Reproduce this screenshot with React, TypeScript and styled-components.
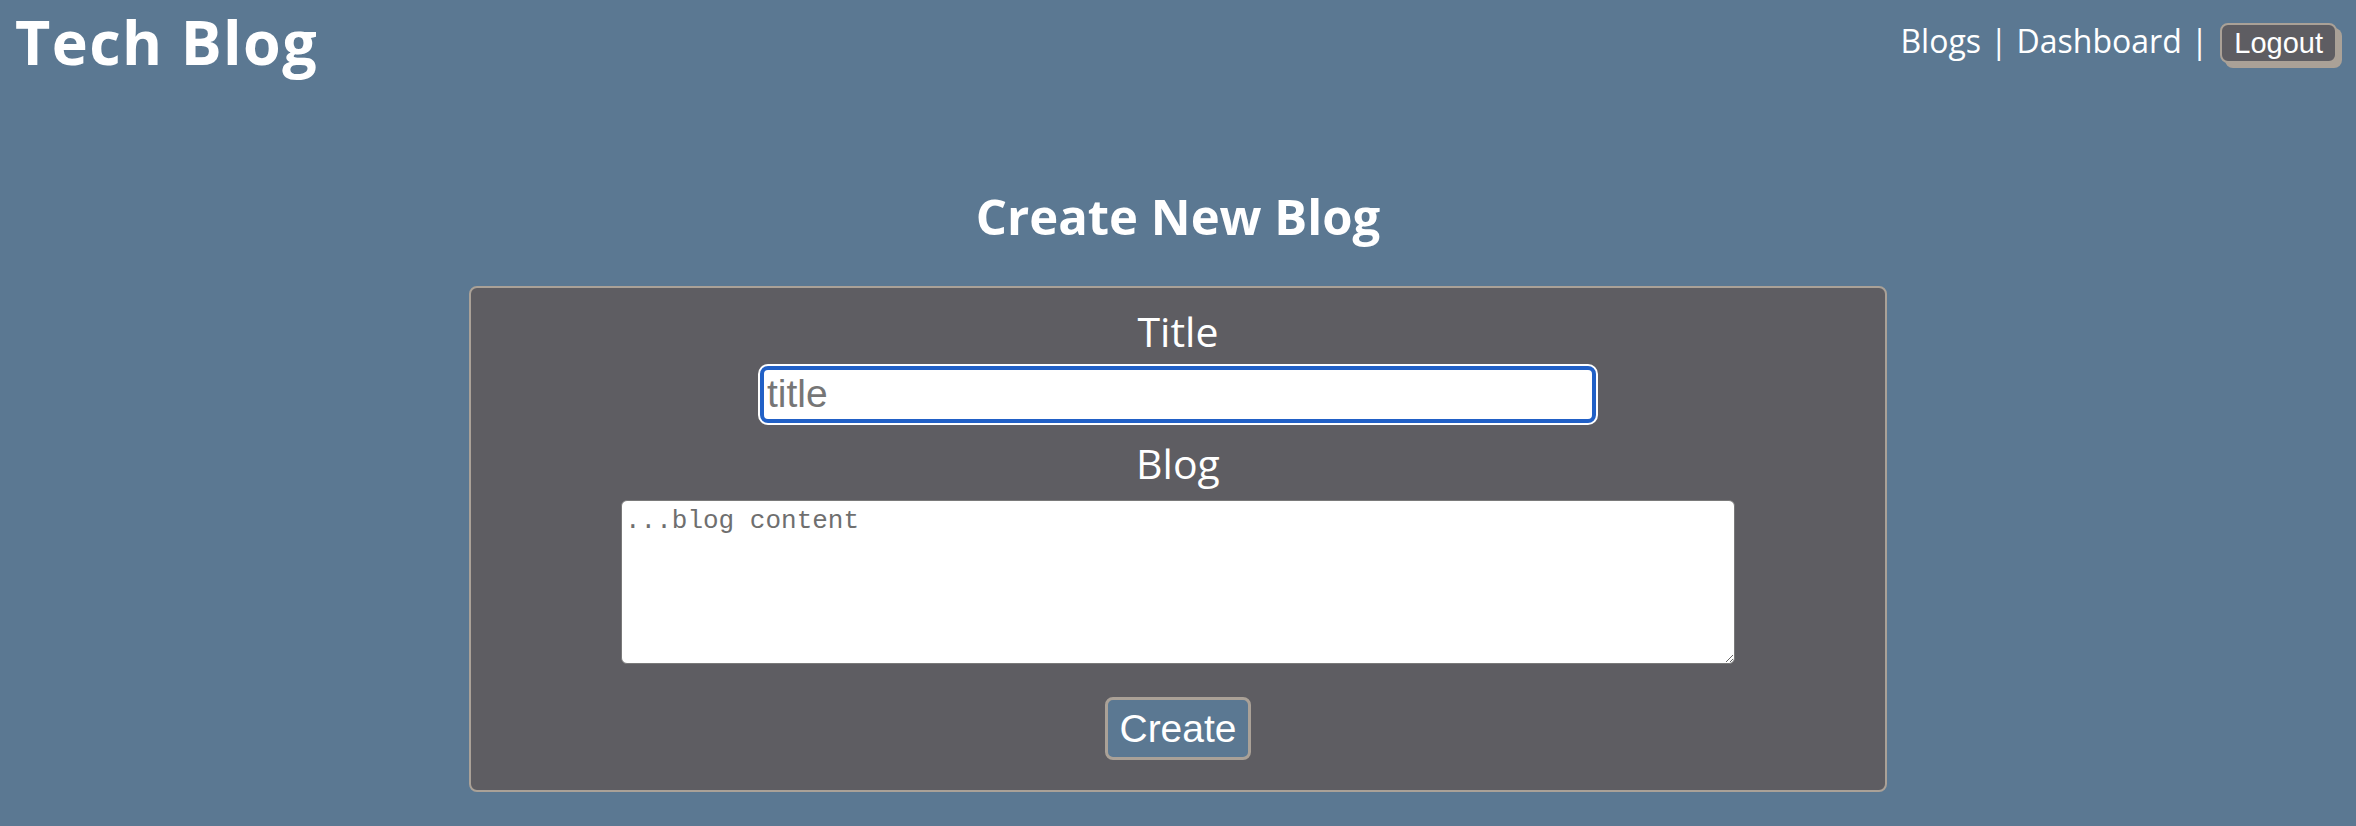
import React from "react";
import styled, { createGlobalStyle } from "styled-components";

const GlobalStyle = createGlobalStyle`
  html, body {
    margin: 0;
    padding: 0;
    background: #5b7892;
  }
  body {
    min-height: 100vh;
    font-family: "Open Sans", "Noto Sans", sans-serif;
    color: #ffffff;
  }
  * { box-sizing: border-box; }
`;

const Page = styled.div`
  min-height: 826px;
  background: #5b7892;
`;

const Header = styled.header`
  display: flex;
  justify-content: space-between;
  align-items: flex-start;
`;

const Brand = styled.h1`
  margin: 11px 0 0 15px;
  font-size: 61px;
  line-height: 1;
  font-weight: 700;
  letter-spacing: 1.4px;
  color: #ffffff;
`;

const Nav = styled.nav`
  display: flex;
  align-items: baseline;
  margin: 23px 19px 0 0;
  font-size: 32px;
  line-height: 32px;
`;

const NavLink = styled.a`
  color: #ffffff;
  text-decoration: none;
  cursor: pointer;
`;

const Divider = styled.span<{ $right?: number }>`
  margin: 0 ${(p) => p.$right ?? 9}px 0 9px;
`;

const LogoutButton = styled.button`
  font-family: "Liberation Sans", Arial, sans-serif;
  font-size: 29px;
  line-height: 32px;
  color: #ffffff;
  background: #5e5d62;
  border: 2px solid #aaa197;
  border-radius: 8px;
  padding: 2px 12px;
  box-shadow: 5px 5px 0 #aaa197;
  cursor: pointer;
`;

const Main = styled.main`
  display: flex;
  flex-direction: column;
  align-items: center;
`;

const Heading = styled.h2`
  margin: 115px 0 40px;
  font-size: 49px;
  line-height: 1.2;
  font-weight: 700;
  color: #ffffff;
`;

const Form = styled.form`
  box-sizing: content-box;
  width: 60%;
  display: flex;
  flex-direction: column;
  align-items: center;
  background: #5e5d62;
  border: 2px solid #aaa197;
  border-radius: 8px;
  padding: 19px 0 30px;
`;

const Label = styled.label<{ $gap: number }>`
  font-size: 41px;
  line-height: 49px;
  color: #ffffff;
  margin-bottom: ${(p) => p.$gap}px;
`;

const TitleInput = styled.input`
  width: 836px;
  height: 57px;
  padding: 0 3px;
  font-family: "Liberation Sans", Arial, sans-serif;
  font-size: 39px;
  color: #222;
  background: #ffffff;
  border: 4px solid #2160c6;
  border-radius: 8px;
  box-shadow: 0 0 0 2px #ffffff;
  outline: none;
  margin-bottom: 16px;
  &::placeholder {
    color: #767676;
  }
`;

const ContentArea = styled.textarea`
  width: 1114px;
  height: 164px;
  padding: 5px 3px;
  font-family: "Liberation Mono", "Courier New", monospace;
  font-size: 26px;
  color: #222;
  background: #ffffff;
  border: 1.5px solid #7a7a7a;
  border-radius: 6px;
  margin-bottom: 33px;
  &::placeholder {
    color: #6f6f6f;
  }
`;

const CreateButton = styled.button`
  font-family: "Liberation Sans", Arial, sans-serif;
  font-size: 39px;
  line-height: 45px;
  color: #ffffff;
  background: #5b7892;
  border: 3px solid #aaa197;
  border-radius: 8px;
  padding: 6px 11px;
  cursor: pointer;
`;

export default function App() {
  return (
    <Page>
      <GlobalStyle />
      <Header>
        <Brand>Tech Blog</Brand>
        <Nav>
          <NavLink>Blogs</NavLink>
          <Divider>|</Divider>
          <NavLink>Dashboard</NavLink>
          <Divider $right={12}>|</Divider>
          <LogoutButton type="button">Logout</LogoutButton>
        </Nav>
      </Header>
      <Main>
        <Heading>Create New Blog</Heading>
        <Form onSubmit={(e) => e.preventDefault()}>
          <Label htmlFor="title" $gap={10}>Title</Label>
          <TitleInput id="title" placeholder="title" autoFocus />
          <Label htmlFor="content" $gap={12}>Blog</Label>
          <ContentArea id="content" placeholder="...blog content" />
          <CreateButton type="submit">Create</CreateButton>
        </Form>
      </Main>
    </Page>
  );
}
